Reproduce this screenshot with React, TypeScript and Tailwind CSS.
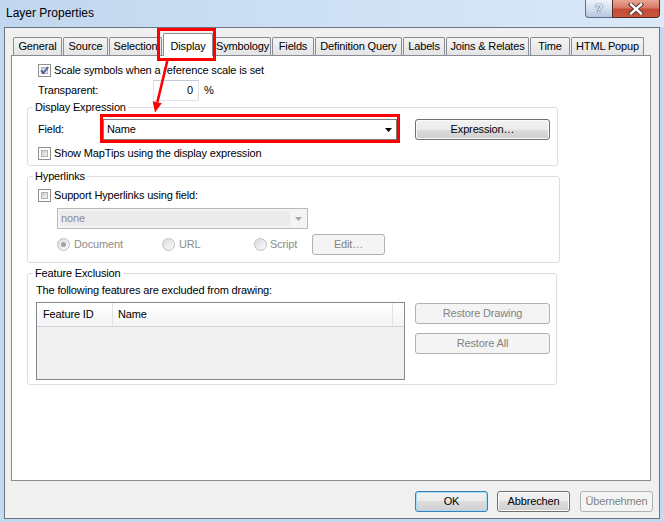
import React from "react";

type TabDef = { label: string; w: string; selected?: boolean };

const tabs: TabDef[] = [
  { label: "General", w: "w-[49px]" },
  { label: "Source", w: "w-[45px]" },
  { label: "Selection", w: "w-[53px]" },
  { label: "Display", w: "w-[50px]", selected: true },
  { label: "Symbology", w: "w-[57px]" },
  { label: "Fields", w: "w-[42px]" },
  { label: "Definition Query", w: "w-[87px]" },
  { label: "Labels", w: "w-[42px]" },
  { label: "Joins & Relates", w: "w-[83px]" },
  { label: "Time", w: "w-[40px]" },
  { label: "HTML Popup", w: "w-[73px]" },
];

function CheckBox({ checked = false }: { checked?: boolean }) {
  return (
    <span className="relative inline-block w-[13px] h-[13px] shrink-0 border border-[#8e8f8f] bg-white">
      <span className="absolute left-[2px] top-[2px] w-[7px] h-[7px] border border-[#aeb3b9] bg-linear-to-br from-[#c6cbd2] to-[#f4f4f4]" />
      {checked && (
        <svg className="absolute left-0 top-0" width="11" height="11" viewBox="0 0 11 11">
          <path d="M2 5.3 L4.4 8 L9.2 2" fill="none" stroke="#4a5f97" strokeWidth="1.9" />
        </svg>
      )}
    </span>
  );
}

function Radio({ checked = false }: { checked?: boolean }) {
  return (
    <span className="relative inline-block w-[13px] h-[13px] shrink-0 rounded-full border border-[#bcc0c4] bg-linear-to-br from-[#dcdcdc] to-[#fbfbfb]">
      {checked && <span className="absolute left-[3px] top-[3px] w-[5px] h-[5px] rounded-full bg-[#a4a4a4]" />}
    </span>
  );
}

function Btn({
  children,
  className = "",
  disabled = false,
  focused = false,
}: {
  children: React.ReactNode;
  className?: string;
  disabled?: boolean;
  focused?: boolean;
}) {
  let look =
    "border-[#707070] bg-[linear-gradient(#f2f2f2_0%,#ebebeb_50%,#dddddd_50%,#cfcfcf_100%)] shadow-[inset_0_0_0_1px_#fbfbfb] text-black";
  if (disabled) look = "border-[#adb2b5] bg-[#f4f4f4] text-[#838383]";
  if (focused)
    look =
      "border-[#3c7fb1] bg-[linear-gradient(#f2f2f2_0%,#ebebeb_50%,#dddddd_50%,#cfcfcf_100%)] shadow-[inset_0_0_0_1px_#a6dcf6] text-black";
  return (
    <div className={`flex items-center justify-center h-[21px] rounded-[3px] border shrink-0 ${look} ${className}`}>
      {children}
    </div>
  );
}

function DropArrow({ color }: { color: string }) {
  return (
    <svg width="7" height="4" viewBox="0 0 7 4">
      <path d="M0 0 H7 L3.5 4 Z" fill={color} />
    </svg>
  );
}

export default function App() {
  return (
    <div className="relative w-[664px] h-[522px] overflow-hidden bg-[#c4daf1] font-[Liberation_Sans,Arial,sans-serif] text-[11px] leading-[13px] tracking-[-0.15px] text-black select-none">
      {/* Title bar */}
      <div className="flex h-[27px] items-start justify-between bg-linear-to-r from-[#c1d7ef] to-[#dbe9f8]">
        <div className="pl-[6px] pt-[6px] text-[12px] leading-[15px] tracking-normal">Layer Properties</div>
        <div className="flex mr-[4px]">
          <div className="flex items-center justify-center w-[27px] h-[18px] border border-t-0 border-r-0 border-[#5d6f8a] rounded-bl-[4px] bg-linear-to-b from-[#eef3fa] via-[#d5e0ee] to-[#b6c7dd]">
            <span className="text-[13px] leading-[13px] font-bold text-[#f4f7fb] [text-shadow:0_0_1px_#1f3553,0_0_1px_#1f3553]">?</span>
          </div>
          <div className="flex items-center justify-center w-[48px] h-[18px] border border-t-0 border-[#5a2b25] rounded-br-[4px] bg-[linear-gradient(#e7a596_0%,#d87b68_45%,#c44a35_55%,#c9563e_100%)]">
            <svg width="16" height="12" viewBox="0 0 16 12">
              <path d="M3 1.5 L13 10.5 M13 1.5 L3 10.5" stroke="#4a2a28" strokeWidth="4.2" strokeLinecap="square" />
              <path d="M3 1.5 L13 10.5 M13 1.5 L3 10.5" stroke="#ffffff" strokeWidth="2.4" strokeLinecap="square" />
            </svg>
          </div>
        </div>
      </div>

      {/* Client area */}
      <div className="mx-[4px] h-[492px] border border-[#6b7480] bg-[#f0f0f0]">
        {/* Tabs */}
        <div className="flex items-end h-[27px] pl-[8px]">
          {tabs.map((t) =>
            t.selected ? (
              <div
                key={t.label}
                className={`relative z-10 mb-[-1px] mr-[1px] flex items-start justify-center pt-[6px] h-[23px] border border-b-0 border-[#898c95] rounded-t-[2px] bg-white ${t.w}`}
              >
                {t.label}
              </div>
            ) : (
              <div
                key={t.label}
                className={`mr-[1px] flex items-center justify-center h-[18px] border border-b-0 border-[#898c95] rounded-t-[2px] bg-linear-to-b from-[#f4f4f4] to-[#e4e4e4] whitespace-nowrap ${t.w}`}
              >
                {t.label}
              </div>
            )
          )}
        </div>

        {/* Tab panel */}
        <div className="ml-[6px] w-[640px] h-[426px] border border-[#898c95] bg-white pl-[15px] pt-[8px]">
          {/* scale symbols */}
          <div className="ml-[11px] flex items-center h-[13px] gap-[3px]">
            <CheckBox checked />
            <span>Scale symbols when a reference scale is set</span>
          </div>
          {/* transparent */}
          <div className="ml-[11px] mt-[3px] flex items-center h-[21px]">
            <span className="w-[115px]">Transparent:</span>
            <div className="flex items-center justify-end w-[46px] h-[21px] border border-[#dfe3e8] border-t-[#c6cbd2] bg-white pr-[5px]">
              0
            </div>
            <span className="ml-[5px]">%</span>
          </div>

          {/* Display Expression */}
          <fieldset className="w-[531px] border border-[#d5dfe5] rounded-[3px] px-0 pb-[5px]">
            <legend className="ml-[5px] px-[2px] leading-[13px]">Display Expression</legend>
            <div className="pl-[10px]">
              <div className="mt-[5px] flex items-center h-[21px]">
                <span className="w-[65px]">Field:</span>
                <div className="flex items-center justify-between w-[294px] h-[21px] border border-[#7a7a7a] bg-white pl-[3px] pr-[4px]">
                  <span>Name</span>
                  <DropArrow color="#000000" />
                </div>
                <Btn className="ml-[18px] w-[135px]">Expression…</Btn>
              </div>
              <div className="mt-[7px] flex items-center h-[13px] gap-[3px]">
                <CheckBox />
                <span>Show MapTips using the display expression</span>
              </div>
            </div>
          </fieldset>

          {/* Hyperlinks */}
          <fieldset className="mt-[4px] w-[533px] border border-[#d5dfe5] rounded-[3px] px-0 pb-[7px]">
            <legend className="ml-[5px] px-[2px] leading-[13px]">Hyperlinks</legend>
            <div className="pl-[10px]">
              <div className="mt-[6px] flex items-center h-[13px] gap-[3px]">
                <CheckBox />
                <span>Support Hyperlinks using field:</span>
              </div>
              <div className="mt-[6px] ml-[19px] flex items-center justify-between w-[251px] h-[21px] border border-[#b7babe] bg-[#f4f4f4] p-[2px] pr-[5px]">
                <div className="flex items-center h-full w-[230px] bg-[#ebebeb] pl-[1px] text-[#8d8d8d]">none</div>
                <DropArrow color="#a8a8a8" />
              </div>
              <div className="mt-[5px] ml-[19px] flex items-center h-[21px] text-[#8d8d8d]">
                <div className="flex items-center gap-[4px] w-[105px]">
                  <Radio checked />
                  <span>Document</span>
                </div>
                <div className="flex items-center gap-[4px] w-[92px]">
                  <Radio />
                  <span>URL</span>
                </div>
                <div className="flex items-center gap-[3px] w-[58px]">
                  <Radio />
                  <span>Script</span>
                </div>
                <Btn disabled className="w-[73px]">
                  Edit…
                </Btn>
              </div>
            </div>
          </fieldset>

          {/* Feature Exclusion */}
          <fieldset className="mt-[4px] w-[530px] border border-[#d5dfe5] rounded-[3px] px-0 pb-[4px]">
            <legend className="ml-[5px] px-[2px] leading-[13px]">Feature Exclusion</legend>
            <div className="pl-[8px]">
              <div className="mt-[4px] flex items-center h-[13px]">The following features are excluded from drawing:</div>
              <div className="mt-[5px] flex items-start">
                <div className="w-[369px] h-[78px] border border-[#828790] bg-[#f0f0f0]">
                  <div className="flex h-[24px] border-b border-[#d5d5d5] bg-linear-to-b from-white to-[#f3f4f6]">
                    <div className="flex items-center w-[76px] border-r border-[#e2e3e5] pl-[6px]">Feature ID</div>
                    <div className="flex items-center w-[280px] border-r border-[#e2e3e5] pl-[5px]">Name</div>
                    <div className="flex-1" />
                  </div>
                </div>
                <div className="ml-[10px] mt-[1px] flex flex-col gap-[9px]">
                  <Btn disabled className="w-[135px]">
                    Restore Drawing
                  </Btn>
                  <Btn disabled className="w-[135px]">
                    Restore All
                  </Btn>
                </div>
              </div>
            </div>
          </fieldset>
        </div>

        {/* Dialog buttons */}
        <div className="mt-[10px] flex justify-end pr-[6px]">
          <Btn focused className="w-[73px]">
            OK
          </Btn>
          <Btn className="ml-[9px] w-[73px]">Abbrechen</Btn>
          <Btn disabled className="ml-[10px] w-[73px]">
            Übernehmen
          </Btn>
        </div>
      </div>

      {/* Red annotation overlay */}
      <svg className="absolute left-0 top-0 pointer-events-none z-20" width="664" height="522" viewBox="0 0 664 522">
        <rect x="158.5" y="29.5" width="56" height="30" fill="none" stroke="#ff0000" strokeWidth="3" />
        <rect x="101.5" y="115.5" width="297" height="26" fill="none" stroke="#ff0000" strokeWidth="3" />
        <path d="M167.5 60 L157.4 102" stroke="#ff0000" strokeWidth="2.6" fill="none" />
        <path d="M155 112.5 L161.8 103.3 L152.7 101.2 Z" fill="#ff0000" />
      </svg>
    </div>
  );
}
